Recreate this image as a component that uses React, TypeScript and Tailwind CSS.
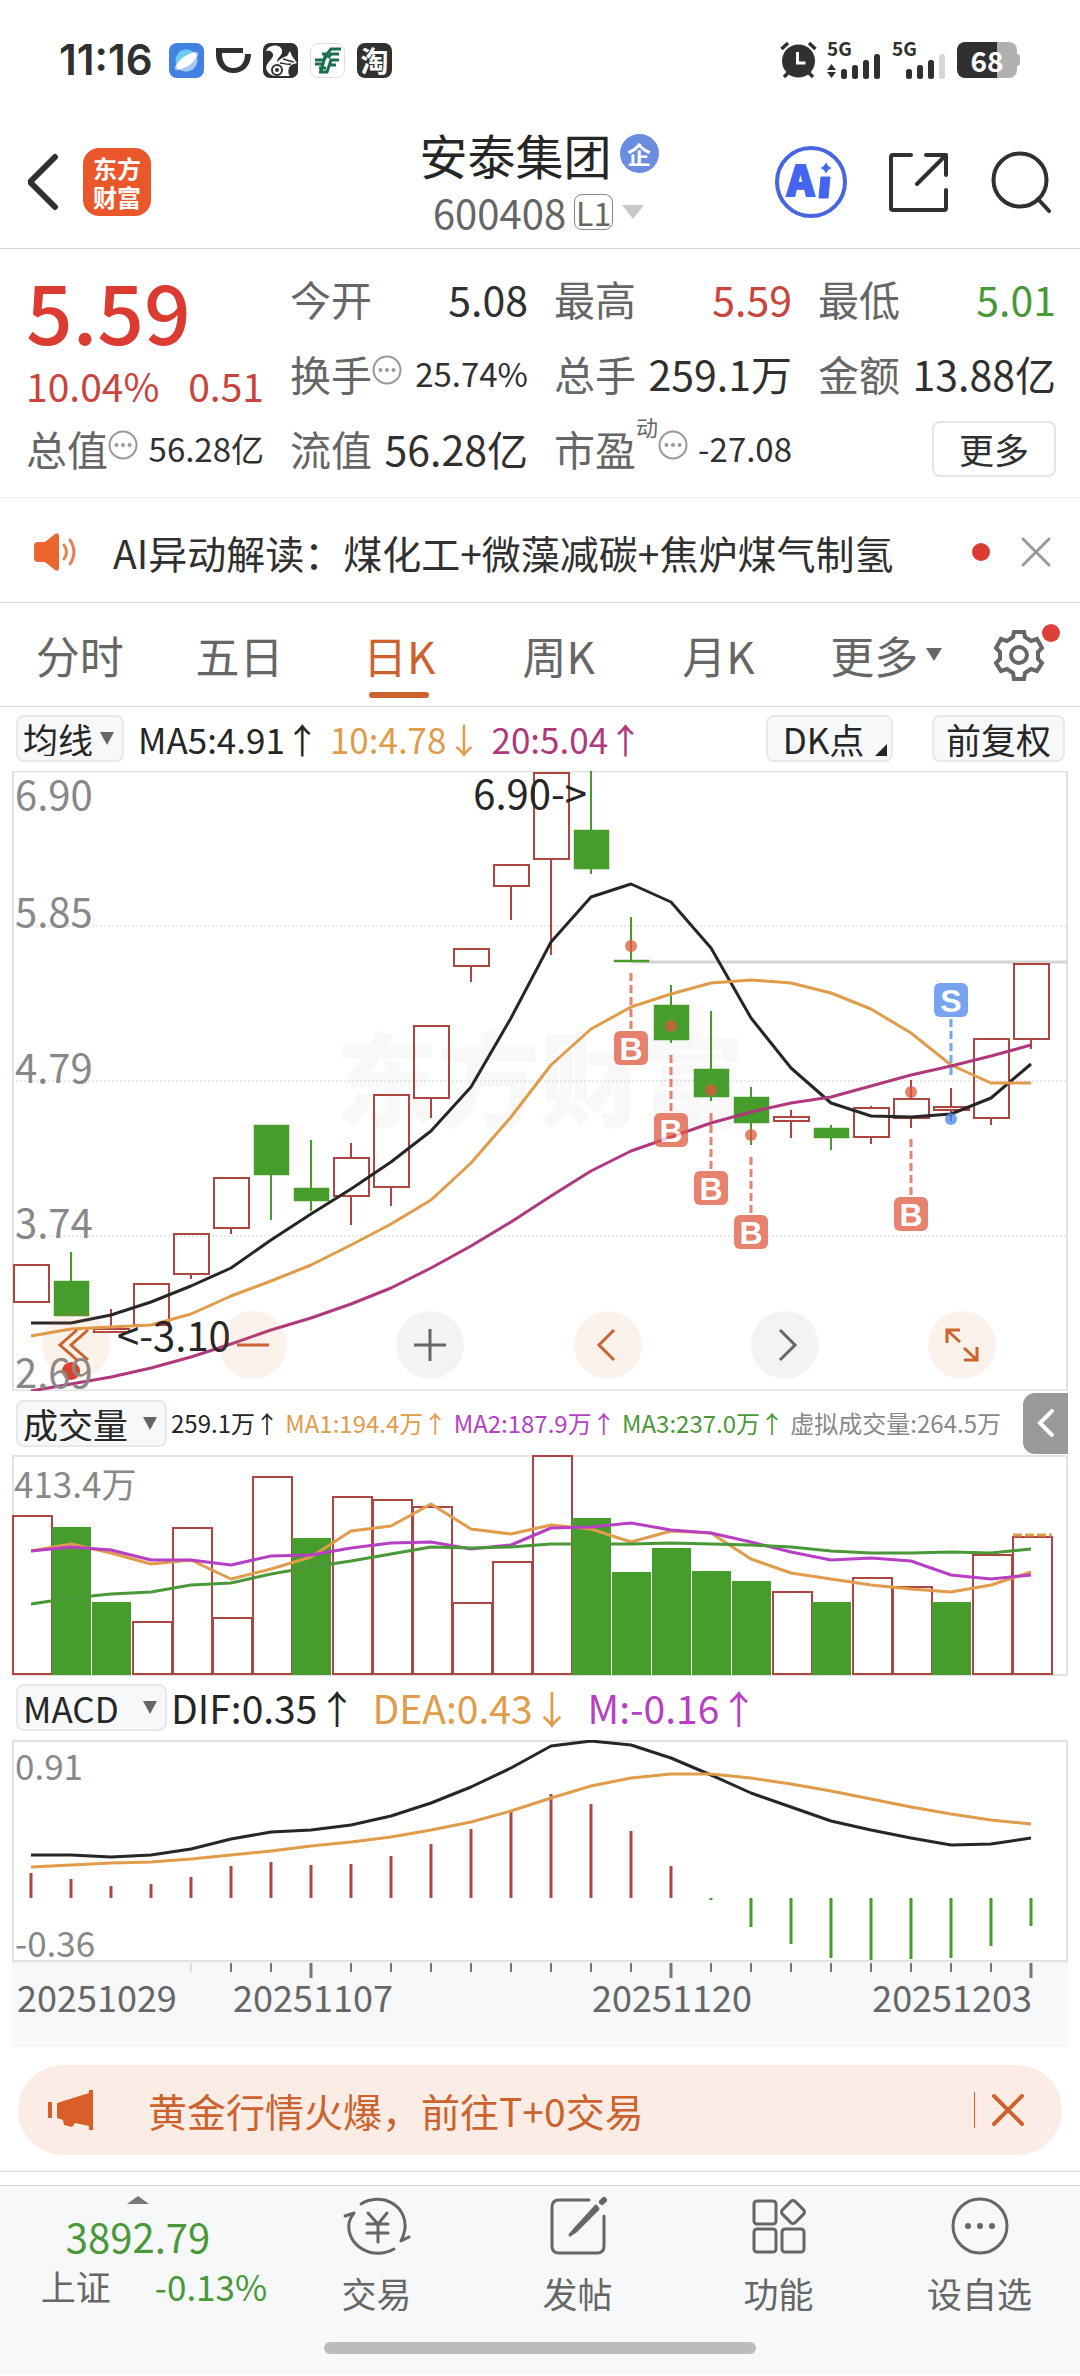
import React from "react";

const STEP = 40;
const cx = (i: number) => 19 + i * STEP;
const toPoints = (ys: number[]) => ys.map((y, i) => `${cx(i)},${y}`).join(" ");

const RED = "#ad4540";
const GREEN = "#479d2c";
const BLACK = "#262626";
const ORANGE = "#e09c4a";
const MAGENTA = "#b0387c";
const PURPLE = "#b63fc4";

// [rising, high, body top, body bottom, low]
const candles: [number, number, number, number, number][] = [
  [1, 494, 494, 531, 531],
  [0, 481, 510, 545, 545],
  [1, 538, 558, 561, 561],
  [1, 513, 513, 554, 554],
  [1, 463, 463, 503, 508],
  [1, 407, 407, 457, 463],
  [0, 354, 354, 404, 449],
  [0, 369, 417, 430, 440],
  [1, 372, 387, 425, 454],
  [1, 324, 324, 416, 435],
  [1, 255, 255, 327, 347],
  [1, 178, 178, 195, 211],
  [1, 94, 94, 115, 149],
  [1, 2, 2, 88, 184],
  [0, 0, 59, 98, 103],
  [0, 146, 189, 191, 191],
  [0, 214, 234, 269, 272],
  [0, 240, 298, 326, 330],
  [0, 316, 326, 352, 374],
  [1, 339, 346, 350, 367],
  [0, 354, 357, 367, 379],
  [1, 335, 337, 366, 373],
  [1, 309, 328, 347, 357],
  [1, 317, 336, 339, 350],
  [1, 268, 268, 347, 354],
  [1, 193, 193, 268, 278],
];

const ma5 = [552, 552, 544, 531, 515, 497, 469, 443, 418, 391, 360, 316, 247, 171, 126, 113, 131, 177, 247, 297, 332, 345, 346, 343, 327, 293];
const ma10 = [565, 558, 556, 554, 543, 525, 510, 494, 474, 453, 429, 392, 346, 294, 258, 236, 223, 212, 209, 212, 222, 238, 262, 294, 312, 312];
const ma20 = [620, 613, 606, 597, 586, 573, 559, 547, 533, 517, 497, 475, 451, 425, 400, 380, 366, 352, 341, 332, 326, 315, 304, 295, 285, 274];

const volumes = [61, 72, 147, 167, 73, 163, 22, 83, 42, 45, 52, 148, 107, 1, 63, 117, 93, 116, 126, 137, 147, 123, 132, 147, 100, 82];
const volumeDown = [1, 2, 7, 14, 15, 16, 17, 18, 20, 23];
const vma1 = [96, 89, 98, 109, 105, 124, 114, 102, 76, 71, 49, 74, 79, 70, 74, 87, 76, 78, 104, 118, 124, 130, 134, 137, 130, 117];
const vma2 = [96, 92, 95, 105, 105, 110, 101, 100, 93, 88, 87, 94, 90, 73, 72, 68, 75, 78, 87, 97, 105, 103, 106, 120, 124, 120];
const vma3 = [149, 143, 139, 137, 130, 128, 119, 112, 106, 99, 92, 93, 92, 89, 89, 89, 88, 89, 90, 92, 96, 98, 98, 97, 98, 94];

const dif = [115, 115, 117, 115, 109, 99, 92, 90, 85, 76, 63, 47, 28, 6, 1, 5, 18, 35, 53, 67, 81, 90, 98, 105, 104, 98];
const dea = [127, 125, 123, 122, 119, 115, 111, 106, 102, 97, 90, 82, 71, 58, 46, 38, 34, 34, 38, 44, 51, 59, 67, 74, 80, 84];
const macd = [133, 139, 146, 144, 137, 126, 122, 125, 124, 116, 104, 89, 72, 54, 64, 91, 126, 160, 187, 204, 218, 220, 219, 218, 206, 186];
const ZERO = 158;

// buy / sell marks: candle index, dot y, badge centre y
const signals = [
  { i: 15, type: "B", dot: 175, badge: 277 },
  { i: 16, type: "B", dot: 255, badge: 359 },
  { i: 17, type: "B", dot: 319, badge: 417 },
  { i: 18, type: "B", dot: 364, badge: 461 },
  { i: 22, type: "B", dot: 321, badge: 443 },
  { i: 23, type: "S", dot: 348, badge: 229 },
];

const StatusBar = () => {
  return (
    <div className="flex h-[120px] items-center justify-between pl-[59px] pr-[60px] text-[#303030]">
      <div className="flex items-center gap-3">
        <span className="mr-1 w-[94px] whitespace-nowrap font-[Inter,sans-serif] text-[42px] font-semibold leading-none">11:16</span>
        <svg width="35" height="35" viewBox="0 0 35 35">
          <rect width="35" height="35" rx="8" fill="#4381e0" />
          <circle cx="17.500" cy="17.500" r="11" fill="#69cdf6" />
          <path d="M7 24a12 12 0 0 0 21-10z" fill="#a9c6f5" />
          <ellipse cx="17.500" cy="18" rx="14" ry="5" transform="rotate(-36 17.5 18)" fill="#a9c6f5" />
          <ellipse cx="17.500" cy="18" rx="12" ry="5" transform="rotate(-36 17.5 18)" fill="#fff" />
        </svg>
        <svg width="35" height="35" viewBox="0 0 35 35">
          <path d="M0 5h27v5H6c0 9 4 15 11.500 15S29 19 29 11h6c0 11-7 19-17.500 19S0 22 0 12z" fill="#303030" />
        </svg>
        <svg width="35" height="35" viewBox="0 0 35 35">
          <rect width="35" height="35" rx="7" fill="#303030" />
          <path d="M3 8C5 2 17 0 19 7c1 6-5 7-5 12 3-3 6-5 10-6l3-5 2 5 5 7-6 2c-3 3-3 7-2 10l1 1H11C4 31 1 25 5 20c2-3 6-6 5-9-1-3-4-4-7-3z" fill="#fff" />
          <circle cx="14" cy="27" r="5" fill="#fff" stroke="#303030" strokeWidth="2" />
          <circle cx="14" cy="27" r="2" fill="#303030" />
          <path d="M17 20c4 0 6 2 11 1M20 16c4 1 6 2 11 3" stroke="#303030" strokeWidth="1.500" fill="none" />
        </svg>
        <svg width="35" height="35" viewBox="0 0 35 35">
          <rect x="0.500" y="0.500" width="34" height="34" rx="8" fill="#fff" stroke="#ddd" />
          <path d="M31 6H21l-4 5h-5M29 11h-8l-3 4M5 17h9l3-5M5 21h8M29 17h-8l-4 12H9M26 22h-7M9 25h7M16 10l-5 18" stroke="#19704f" strokeWidth="3" fill="none" />
        </svg>
        <span className="flex h-[35px] w-[35px] items-center justify-center rounded-lg bg-[#303030] text-[28px] font-bold leading-none text-white">
          淘
        </span>
      </div>
      <div className="flex items-center gap-[10px]">
        <svg width="37" height="38" viewBox="0 0 37 38">
          <circle cx="18.500" cy="20" r="16.500" fill="#303030" />
          <path d="M1.500 8 8 2M35.500 8 29 2M4 36l4-4M33 36l-4-4" stroke="#303030" strokeWidth="3.500" />
          <path d="M17.500 11v11h8" stroke="#fff" strokeWidth="3" fill="none" />
        </svg>
        <Signal arrows />
        <Signal weak />
        <div className="flex items-center">
          <span className="flex h-9 w-[60px] items-center justify-center rounded-lg bg-linear-to-r from-[#303030] from-67% to-[#b0b0b0] to-67% text-[28px] font-bold leading-none text-white">
            68
          </span>
          <span className="h-3 w-[3px] rounded-r-sm bg-[#b0b0b0]" />
        </div>
      </div>
    </div>
  );
};

const Signal = ({ arrows, weak }: { arrows?: boolean; weak?: boolean }) => {
  return (
    <svg width="55" height="38" viewBox="0 0 55 38" fill="#303030" className="overflow-visible">
      <text x="0" y="15" fontSize="19" fontWeight="700">
        5G
      </text>
      {arrows && <path d="M0 29l4.500-6 4.500 6zM0 31h9l-4.500 6z" />}
      <rect x="14" y="28" width="6" height="10" rx="2.500" />
      <rect x="25" y="24" width="6" height="14" rx="2.500" />
      <rect x="36" y="19" width="6" height="19" rx="2.500" />
      <rect x="47" y="13" width="6" height="25" rx="2.500" fill={weak ? "#d6d6d6" : "#303030"} />
    </svg>
  );
};

const Header = () => {
  return (
    <header className="grid h-[129px] grid-cols-[1fr_auto_1fr] items-center border-b border-[#d5d5d5] pb-[5px] pl-[26px] pr-7">
      <div className="flex items-center gap-6">
        <button aria-label="返回">
          <svg width="33" height="58" viewBox="0 0 33 58" fill="none" stroke="#303030" strokeWidth="6" strokeLinecap="round" strokeLinejoin="bevel">
            <path d="M29 4 4 29l25 25" />
          </svg>
        </button>
        <div className="flex h-[68px] w-[68px] flex-col items-center justify-center rounded-2xl bg-[#e9572b] text-[24px] font-bold leading-[29px] text-white">
          <span>东方</span>
          <span>财富</span>
        </div>
      </div>
      <div className="flex flex-col items-center text-[#262626]">
        <div className="flex h-[60px] items-center gap-2">
          <h1 className="text-[48px] leading-none">安泰集团</h1>
          <span className="flex h-[39px] w-[39px] items-center justify-center rounded-full bg-[#6a8de0] text-[24px] font-bold leading-none text-white">
            企
          </span>
        </div>
        <button className="flex h-[56px] items-center gap-2 text-[40px] leading-none text-[#666]">
          600408
          <span className="flex h-9 w-[39px] items-center justify-center rounded-lg border border-[#888] text-[32px] leading-none">
            L1
          </span>
          <svg width="24" height="16" viewBox="0 0 24 16" fill="#c8c8c8">
            <path d="M1 1h22L12 15z" />
          </svg>
        </button>
      </div>
      <div className="flex items-center justify-end gap-[42px]">
        <button aria-label="Ai">
          <svg width="72" height="74" viewBox="0 0 72 74">
            <circle cx="36" cy="37" r="34" fill="none" stroke="#4766e0" strokeWidth="4" />
            <text x="12" y="51" fontSize="41" fontWeight="900" fill="#4365f0" stroke="#4365f0" strokeWidth="2">
              A
            </text>
            <path d="M46 32h9l-2 21h-9z" fill="#4365f0" stroke="#4365f0" strokeLinejoin="round" />
            <path d="M51 17q1.500 5 6 6-4.500 1-6 6-1.500-5-6-6 4.500-1 6-6z" fill="#4365f0" />
          </svg>
        </button>
        <button aria-label="分享">
          <svg width="60" height="60" viewBox="0 0 60 60" fill="none" stroke="#303030" strokeWidth="4" strokeLinecap="round" strokeLinejoin="round">
            <path d="M22 3H4q-2 0-2 2v51q0 2 2 2h51q2 0 2-2V38M37 3h20v20M57 3 28 32" />
          </svg>
        </button>
        <button aria-label="搜索">
          <svg width="61" height="62" viewBox="0 0 61 62" fill="none" stroke="#303030" strokeWidth="4" strokeLinecap="round">
            <circle cx="29" cy="29" r="26.500" />
            <path d="M47 48l11 12" />
          </svg>
        </button>
      </div>
    </header>
  );
};

const Hint = () => {
  return (
    <svg width="30" height="30" viewBox="0 0 30 30" className="mb-2 shrink-0" fill="#999">
      <circle cx="15" cy="15" r="13.500" fill="none" stroke="#999" strokeWidth="2" />
      <circle cx="8.500" cy="15" r="2" />
      <circle cx="15" cy="15" r="2" />
      <circle cx="21.500" cy="15" r="2" />
    </svg>
  );
};

type FieldProps = {
  label: string;
  value: string;
  hint?: boolean;
  sup?: string;
  valueClass?: string;
};

const Field = ({ label, value, hint, sup, valueClass = "text-[41px] text-[#303030]" }: FieldProps) => {
  return (
    <div className="flex h-[75px] items-center justify-between whitespace-nowrap leading-none">
      <dt className="flex items-center text-[41px] text-[#666]">
        {label}
        {sup && <sup className="mb-6 text-[22px] leading-none">{sup}</sup>}
        {hint && <Hint />}
      </dt>
      <dd className={valueClass}>{value}</dd>
    </div>
  );
};

const Quote = () => {
  return (
    <dl className="grid grid-cols-4 gap-x-[26px] border-b border-[#ececec] pb-[11px] pl-[26px] pr-6 pt-3">
      <div>
        <div className="flex h-[98px] items-center text-[82px] font-medium leading-none text-[#dc3b31]">5.59</div>
        <div className="flex h-[52px] items-center justify-between text-[39px] leading-none text-[#c9443c]">
          <span>10.04%</span>
          <span>0.51</span>
        </div>
        <Field label="总值" value="56.28亿" hint valueClass="text-[33px] text-[#303030]" />
      </div>
      <div>
        <Field label="今开" value="5.08" />
        <Field label="换手" value="25.74%" hint valueClass="text-[33px] text-[#303030]" />
        <Field label="流值" value="56.28亿" />
      </div>
      <div>
        <Field label="最高" value="5.59" valueClass="text-[41px] text-[#c9443c]" />
        <Field label="总手" value="259.1万" />
        <Field label="市盈" value="-27.08" sup="动" hint valueClass="text-[33px] text-[#303030]" />
      </div>
      <div>
        <Field label="最低" value="5.01" valueClass="text-[41px] text-[#4a9838]" />
        <Field label="金额" value="13.88亿" />
        <div className="flex h-[75px] items-center justify-end">
          <button className="h-[56px] w-[124px] rounded-lg border-2 border-[#e6e6e6] text-[35px] leading-none text-[#303030]">
            更多
          </button>
        </div>
      </div>
    </dl>
  );
};

const News = () => {
  return (
    <div className="flex h-[105px] items-center border-b border-[#d5d5d5] pl-[34px] pr-7 pt-1">
      <svg width="45" height="38" viewBox="0 0 45 38" fill="#ea6530">
        <path d="M4 9h7L21 1q4-2 4 2v32q0 4-4 2l-10-8H4q-4 0-4-4V13q0-4 4-4z" />
        <path d="M30 12q5 7 0 14M36 7q8 12 0 24" fill="none" stroke="#ea8050" strokeWidth="3" strokeLinecap="round" />
      </svg>
      <a href="#news" className="ml-[34px] flex-1 whitespace-nowrap text-[39px] leading-none text-[#303030]">
        AI异动解读：煤化工+微藻减碳+焦炉煤气制氢
      </a>
      <span className="h-[18px] w-[18px] rounded-full bg-[#dc3b31]" />
      <button aria-label="关闭" className="ml-[30px]">
        <svg width="32" height="32" viewBox="0 0 32 32" stroke="#999" strokeWidth="3" strokeLinecap="round">
          <path d="M3 3l26 26M29 3 3 29" />
        </svg>
      </button>
    </div>
  );
};

const tabs = ["分时", "五日", "日K", "周K", "月K"];

const Tabs = () => {
  return (
    <nav className="flex h-[104px] items-stretch border-b border-[#d5d5d5] text-[44px] leading-none text-[#666]">
      <div className="grid flex-1 grid-cols-6">
        {tabs.map((tab) => (
          <button key={tab} className={tab === "日K" ? "relative text-[#cc622e]" : ""}>
            {tab}
            {tab === "日K" && (
              <span className="absolute bottom-2 left-1/2 h-[6px] w-[60px] -translate-x-1/2 rounded-full bg-[#cc622e]" />
            )}
          </button>
        ))}
        <button className="flex items-center justify-center gap-2 pl-4">
          更多
          <svg width="16" height="13" viewBox="0 0 16 13" fill="#666">
            <path d="M0 0h16L8 13z" />
          </svg>
        </button>
      </div>
      <button aria-label="设置" className="relative flex w-[122px] items-center justify-center">
        <svg width="54" height="54" viewBox="0 0 54 54" fill="none" stroke="#666" strokeWidth="4">
          <path d="M22 4h10l1 5 6 4 6-2 5 9-4 4v7l4 4-5 8-6-2-6 4-1 6H22l-1-6-6-4-6 2-5-8 4-4v-7l-4-4 5-9 6 2 6-4z" />
          <circle cx="27" cy="27" r="8" />
        </svg>
        <span className="absolute right-5 top-[21px] h-[18px] w-[18px] rounded-full bg-[#dc4038]" />
      </button>
    </nav>
  );
};

const Picker = ({ name, value, className }: { name: string; value: string; className: string }) => {
  return (
    <div className={`relative flex h-[47px] shrink-0 items-center rounded-lg border-2 border-[#e6e8ec] bg-[#f7f8fa] ${className}`}>
      <select aria-label={name} defaultValue={value} className="h-full w-full appearance-none pl-[5px] text-[35px] leading-none text-[#262626]">
        <option>{value}</option>
      </select>
      <svg width="14" height="13" viewBox="0 0 14 13" fill="#666" className="pointer-events-none absolute right-2">
        <path d="M0 0h14L7 13z" />
      </svg>
    </div>
  );
};

const KLineBar = () => {
  return (
    <div className="flex h-16 items-center pb-[2px] pl-4 pr-[15px] text-[35px] leading-none whitespace-nowrap">
      <Picker name="主图指标" value="均线" className="w-[108px]" />
      <div className="flex flex-1 gap-[10px] pl-[14px]">
        <span className="text-[#262626]">MA5:4.91↑</span>
        <span className="text-[#e09c4a]">10:4.78↓</span>
        <span className="text-[#b0387c]">20:5.04↑</span>
      </div>
      <button className="relative h-[47px] w-[127px] rounded-lg border-2 border-[#e6e8ec] bg-[#f7f8fa] pr-3 text-[#262626]">
        DK点
        <svg width="12" height="12" viewBox="0 0 12 12" className="absolute bottom-1 right-1" fill="#262626">
          <path d="M12 0v12H0z" />
        </svg>
      </button>
      <button className="ml-[39px] h-[47px] w-[133px] rounded-lg border-2 border-[#e6e8ec] bg-[#f7f8fa] text-[#262626]">
        前复权
      </button>
    </div>
  );
};

const controls = [
  { name: "快退", accent: true, d: "M35 19 18 34l17 15M46 19 29 34l17 15" },
  { name: "缩小", accent: true, d: "M18 34h32" },
  { name: "放大", accent: false, d: "M18 34h32M34 18v32" },
  { name: "左移", accent: true, d: "M40 19 25 34l15 15" },
  { name: "右移", accent: false, d: "M29 19l15 15-15 15" },
  { name: "全屏", accent: true, d: "M19 32V19h13M19 19l13 12M49 36v13H36M49 49 36 37" },
];

const KLineChart = () => {
  return (
    <div className="relative">
      <svg viewBox="0 0 1056 620" className="block w-full">
        <text x="528" y="348" textAnchor="middle" fontSize="102" fontWeight="900" fill="#f8f8f8">
          东方财富
        </text>
        {[155, 310, 465].map((y) => (
          <line key={y} x1="0" x2="1056" y1={y} y2={y} stroke="#d4d4d4" strokeDasharray="2 2" />
        ))}
        <rect x="1" y="0.500" width="1054" height="619" fill="none" stroke="#e2e2e2" strokeWidth="2" />
        <line x1="619" x2="1056" y1="191" y2="191" stroke="#d4d4d6" strokeWidth="3" />
        {candles.map(([up, high, top, bottom, low], i) => (
          <g key={i} stroke={up ? RED : GREEN} strokeWidth="2">
            <line x1={cx(i)} x2={cx(i)} y1={high} y2={top} />
            <line x1={cx(i)} x2={cx(i)} y1={bottom} y2={low} />
            <rect x={cx(i) - 17} y={top} width="35" height={bottom - top} fill={up ? "none" : GREEN} strokeWidth={up ? 2 : 0.5} />
          </g>
        ))}
        <g fill="none" strokeWidth="3" strokeLinejoin="round">
          <polyline points={toPoints(ma5)} stroke={BLACK} />
          <polyline points={toPoints(ma10)} stroke={ORANGE} />
          <polyline points={toPoints(ma20)} stroke={MAGENTA} />
        </g>
        {signals.map(({ i, type, dot, badge }) => {
          const color = type === "B" ? "#e0593f" : "#4a86ec";
          const from = type === "B" ? badge - 75 : badge + 19;
          return (
            <g key={i} opacity="0.75">
              <circle cx={cx(i)} cy={dot} r="6" fill={color} />
              <line x1={cx(i)} x2={cx(i)} y1={from} y2={from + 56} stroke={color} strokeWidth="3" strokeDasharray="8 4" />
              <rect x={cx(i) - 17} y={badge - 17} width="34" height="34" rx="6" fill={color} />
              <text x={cx(i)} y={badge + 12} textAnchor="middle" fontSize="32" fontWeight="700" fill="#fff" fontFamily="Liberation Sans, sans-serif">
                {type}
              </text>
            </g>
          );
        })}
        <circle cx="59" cy="600" r="9" fill="#dc3b31" />
        <g fontSize="40" fill="#888">
          <text x="3" y="39">6.90</text>
          <text x="3" y="156">5.85</text>
          <text x="3" y="312">4.79</text>
          <text x="3" y="467">3.74</text>
          <text x="3" y="617">2.69</text>
        </g>
        <g fontSize="40" fill={BLACK}>
          <text x="575" y="38" textAnchor="end">6.90-&gt;</text>
          <text x="105" y="580">&lt;-3.10</text>
        </g>
      </svg>
      <div className="absolute bottom-3 left-[30px] right-[72px] flex justify-between">
        {controls.map((c) => (
          <button
            key={c.name}
            aria-label={c.name}
            className={c.accent ? "rounded-full bg-[#e0783218] text-[#cc622e]" : "rounded-full bg-[#0000000c] text-[#666]"}
          >
            <svg width="68" height="68" viewBox="0 0 68 68" fill="none" stroke="currentColor" strokeWidth="3">
              <path d={c.d} />
            </svg>
          </button>
        ))}
      </div>
    </div>
  );
};

const VolumeBar = () => {
  return (
    <div className="flex h-16 items-center pl-4 text-[24px] leading-none whitespace-nowrap">
      <Picker name="副图指标一" value="成交量" className="w-[151px]" />
      <div className="flex flex-1 items-center justify-between pl-1 pr-[22px]">
        <span className="text-[#262626]">259.1万↑</span>
        <span className="text-[#e09c4a]">MA1:194.4万↑</span>
        <span className="text-[#b63fc4]">MA2:187.9万↑</span>
        <span className="text-[#4a9838]">MA3:237.0万↑</span>
        <span className="text-[#888]">虚拟成交量:264.5万</span>
      </div>
      <button aria-label="展开" className="mr-3 flex h-[61px] w-[45px] items-center justify-center rounded-l-xl bg-[#999]">
        <svg width="18" height="30" viewBox="0 0 18 30" fill="none" stroke="#fff" strokeWidth="4" strokeLinecap="round">
          <path d="M15 3 3 15l12 12" />
        </svg>
      </button>
    </div>
  );
};

const VolumeChart = () => {
  return (
    <svg viewBox="0 0 1056 221" className="block w-full">
      <rect x="1" y="1" width="1054" height="219" fill="none" stroke="#e2e2e2" strokeWidth="2" />
      {volumes.map((y, i) =>
        volumeDown.includes(i) ? (
          <rect key={i} x={cx(i) - 19} y={y} width="39" height={220 - y} fill={GREEN} />
        ) : (
          <rect key={i} x={cx(i) - 18} y={y} width="39" height={219 - y} fill="none" stroke={RED} strokeWidth="2" />
        )
      )}
      <line x1={cx(25) - 18} x2={cx(25) + 21} y1="80" y2="80" stroke={ORANGE} strokeWidth="3" strokeDasharray="9 3" />
      <g fill="none" strokeWidth="3" strokeLinejoin="round">
        <polyline points={toPoints(vma1)} stroke={ORANGE} />
        <polyline points={toPoints(vma2)} stroke={PURPLE} />
        <polyline points={toPoints(vma3)} stroke="#4a9838" />
      </g>
      <text x="2" y="43" fontSize="35" fill="#888">
        413.4万
      </text>
    </svg>
  );
};

const MacdBar = () => {
  return (
    <div className="flex h-16 items-center gap-1 pb-[2px] pl-4 text-[39px] leading-none whitespace-nowrap">
      <Picker name="副图指标二" value="MACD" className="w-[151px]" />
      <div className="flex gap-4">
        <span className="text-[#262626]">DIF:0.35↑</span>
        <span className="text-[#e09c4a]">DEA:0.43↓</span>
        <span className="text-[#b63fc4]">M:-0.16↑</span>
      </div>
    </div>
  );
};

const MacdChart = () => {
  return (
    <svg viewBox="0 0 1056 222" className="block w-full">
      <rect x="1" y="1" width="1054" height="220" fill="none" stroke="#e2e2e2" strokeWidth="2" />
      {macd.map((y, i) => (
        <line key={i} x1={cx(i)} x2={cx(i)} y1={ZERO} y2={y} stroke={y < ZERO ? RED : GREEN} strokeWidth="3" />
      ))}
      <g fill="none" strokeWidth="3" strokeLinejoin="round">
        <polyline points={toPoints(dif)} stroke={BLACK} />
        <polyline points={toPoints(dea)} stroke={ORANGE} />
      </g>
      <g fontSize="35" fill="#888">
        <text x="3" y="40">0.91</text>
        <text x="3" y="217">-0.36</text>
      </g>
    </svg>
  );
};

const DateAxis = () => {
  return (
    <svg viewBox="0 0 1056 85" className="block w-full bg-[#f7f8fa]">
      {macd.map((_, i) => {
        if (i < 4) return null;
        const major = i % 9 === 7;
        return (
          <line
            key={i}
            x1={cx(i)}
            x2={cx(i)}
            y1="1"
            y2={major ? 16 : 10}
            stroke={i === 4 ? "#ddd" : "#777"}
            strokeWidth={major ? 3 : 2}
          />
        );
      })}
      <g fontSize="36" fill="#666">
        <text x="5" y="50">20251029</text>
        <text x="301" y="50" textAnchor="middle">20251107</text>
        <text x="660" y="50" textAnchor="middle">20251120</text>
        <text x="1020" y="50" textAnchor="end">20251203</text>
      </g>
    </svg>
  );
};

const Banner = () => {
  return (
    <div className="border-b border-[#d3d7d9] px-[18px] pb-4 pt-[18px]">
      <div className="flex h-[90px] items-center rounded-full bg-[#fbede5] pl-[30px] pr-[37px] text-[#cc622e]">
        <svg width="46" height="40" viewBox="0 0 46 40" fill="#d95f28">
          <path d="M0 12h4v16H0zM9 13 41 3V0h4v40h-4v-4l-14-3-3 4-8-2-1-5-6-2z" />
        </svg>
        <a href="#gold" className="flex-1 pl-[54px] text-[39px] leading-none">
          黄金行情火爆，前往T+0交易
        </a>
        <span className="mr-4 h-9 w-px bg-[#cc622e]" />
        <button aria-label="关闭">
          <svg width="34" height="34" viewBox="0 0 34 34" stroke="currentColor" strokeWidth="4" strokeLinecap="round">
            <path d="M3 3l28 28M31 3 3 31" />
          </svg>
        </button>
      </div>
    </div>
  );
};

const navItems = [
  {
    label: "交易",
    icon: (
      <>
        <path d="M16 8C36-4 62 8 60 33q-1 6-4 12l8-4M49 53C28 65 1 50 4 27q1-5 5-10L0 20" />
        <path d="M23 17l10 11 9-11M33 28v18M22 28h21M22 37h21" />
      </>
    ),
  },
  {
    label: "发帖",
    icon: (
      <>
        <path d="M43 4H13q-7 0-7 7v39q0 7 7 7h38q7 0 7-7V20" />
        <path d="M50 10 29 33l-5 6 6-4 22-22z" fill="#666" />
        <path d="M56 6l2-2" strokeWidth="6" />
      </>
    ),
  },
  {
    label: "功能",
    icon: (
      <>
        <rect x="7" y="5" width="22" height="23" rx="3" />
        <rect x="7" y="33" width="22" height="23" rx="3" />
        <rect x="35" y="33" width="22" height="23" rx="3" />
        <rect x="37" y="7" width="18" height="18" rx="3" transform="rotate(45 46 16)" />
      </>
    ),
  },
  {
    label: "设自选",
    icon: (
      <>
        <circle cx="32" cy="30" r="27" />
        <g fill="#666" stroke="none">
          <circle cx="20" cy="30" r="3" />
          <circle cx="32" cy="30" r="3" />
          <circle cx="44" cy="30" r="3" />
        </g>
      </>
    ),
  },
];

const BottomNav = () => {
  return (
    <footer className="mt-[13px] border-t border-[#d3d7d9] bg-[#f6f8fa] pb-5">
      <nav className="flex h-[156px] pt-[10px] text-[35px] leading-none text-[#666]">
        <a href="#index" className="flex w-[276px] flex-col items-center text-[#4a9838]">
          <svg width="22" height="8" viewBox="0 0 22 8" fill="#777">
            <path d="M11 0l11 8H0z" />
          </svg>
          <span className="mt-3 text-[40px] leading-[40px]">3892.79</span>
          <span className="mt-3 flex gap-11 pl-8">
            <span className="text-[#666]">上证</span>
            <span>-0.13%</span>
          </span>
        </a>
        {navItems.map(({ label, icon }) => (
          <a key={label} href="#nav" className="flex flex-1 flex-col items-center gap-[19px]">
            <svg width="64" height="60" viewBox="0 0 64 60" fill="none" stroke="#666" strokeWidth="3" strokeLinecap="round" strokeLinejoin="round" className="overflow-visible">
              {icon}
            </svg>
            {label}
          </a>
        ))}
      </nav>
      <div className="mx-auto h-3 w-2/5 rounded-full bg-[#bbbcbe]" />
    </footer>
  );
};

const App = () => {
  return (
    <div className="min-h-screen bg-white font-['Noto_Sans_CJK_SC',sans-serif]">
      <StatusBar />
      <Header />
      <Quote />
      <News />
      <Tabs />
      <KLineBar />
      <div className="px-3">
        <KLineChart />
      </div>
      <VolumeBar />
      <div className="px-3">
        <VolumeChart />
      </div>
      <MacdBar />
      <div className="px-3">
        <MacdChart />
        <DateAxis />
      </div>
      <Banner />
      <BottomNav />
    </div>
  );
};

export default App;
